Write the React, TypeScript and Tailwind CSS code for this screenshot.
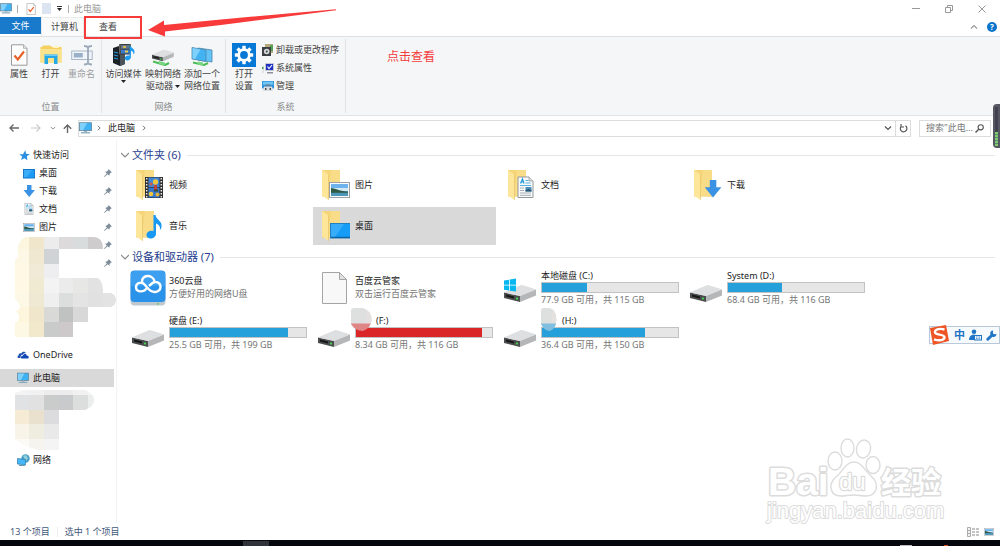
import type { ReactNode } from 'react';

const MonitorIcon = ({ className = 'h-3 w-3' }: { className?: string }) => (
  <svg viewBox="0 0 14 13" className={className} aria-hidden="true">
    <rect x="0.5" y="0.8" width="13" height="8.6" fill="#3fb2f4" stroke="#5f7d92" strokeWidth="0.8" />
    <path d="M1 1.2h7.6L4.5 9H1z" fill="#7fd0fb" />
    <path d="M5.5 9.8h3l.5 1.2h-4z" fill="#9fb3c0" />
    <rect x="2" y="11" width="10" height="1.4" fill="#8aa9bd" />
  </svg>
);

const CheckPageIcon = ({ className }: { className: string }) => (
  <svg viewBox="0 0 18 22" className={className} aria-hidden="true">
    <path d="M1.5.8h12l3.5 3.5v16.9H1.500z" fill="#fdfdfd" stroke="#9a9a9a" />
    <path d="M13.500.8v3.500H17" fill="#e6e6e6" stroke="#9a9a9a" strokeWidth="0.700" />
    <path d="M4.500 11.500l3.300 4L14 7.500" fill="none" stroke="#e8622c" strokeWidth="2.200" />
  </svg>
);

const OpenIcon = () => (
  <svg viewBox="0 0 22 22" className="h-[22px] w-[22px]" aria-hidden="true">
    <path d="M.5 3h2V1.500h8L12 3h9.500v15.500H.5z" fill="#f6cf63" />
    <path d="M.5 5h21v13.500H.5z" fill="#fbe28d" />
    <path d="M13 1.800h6V4h-6z" fill="#fff3c4" />
    <path d="M4.500 20v-9.500h13V20h-3.500v-6h-6v6z" fill="#25a8e6" />
    <path d="M4.500 10.500h13V12h-13z" fill="#70cdf5" />
  </svg>
);

const RenameIcon = () => (
  <svg viewBox="0 0 22 22" className="h-[22px] w-[22px]" aria-hidden="true">
    <rect x="0.700" y="7" width="20.500" height="8.500" fill="#f1f4f8" stroke="#a9b7c8" />
    <rect x="2.800" y="9" width="9" height="4.500" fill="#9ab0c9" />
    <path d="M13 2c2 0 3.500.5 4 1.500.5-1 2-1.500 4-1.500M17 3v16M13 20.500c2 0 3.500-.5 4-1.500.5 1 2 1.500 4 1.500" fill="none" stroke="#9aa9ba" strokeWidth="1.800" />
  </svg>
);

const MediaIcon = () => (
  <svg viewBox="0 0 24 22" className="h-[22px] w-6" aria-hidden="true">
    <path d="M1 4l6-2 6 2v16l-5 2-7-3z" fill="#1c2126" />
    <path d="M8 6l5-2v16l-5 2z" fill="#4b545b" />
    <path d="M2 8l4 1M2 11l4 1M2 14l4 1" stroke="#2a9be0" strokeWidth="1.200" />
    <path d="M7 0h12v10.500H7z" fill="#3b3b38" />
    <path d="M9 1h8v3.800H9z" fill="#61778b" /><path d="M9 5.700h8v3.800H9z" fill="#3b7bd0" />
    <path d="M11 2h3v2h-3z" fill="#d8b553" /><path d="M13 6.500h3v2h-3z" fill="#e9c94e" />
    <path d="M7.800.5v10M18.200.5v10" stroke="#ddd" strokeWidth="0.800" strokeDasharray="1 1" />
    <path d="M17.500 0c.5 4 5.500 4 5 8.500-.3 1.500-1 2-1 2 .3-3-2-3.500-2.600-4V13c0 3.500-5 4.500-6 2-.6-2.500 2.600-4 4.600-3.200z" fill="#1d9bf0" />
  </svg>
);

const DriveShape = () => (
  <g>
    <path d="M0 8.500L18 1l14 4.500-16 9.500z" fill="#dcdedf" />
    <path d="M0 8.500L16 12v6L0 14z" fill="#4a4c4d" />
    <path d="M16 12L32 5.500v6L16 18z" fill="#b4b6b8" />
    <path d="M0 8.500L17 1.200 32 5.500 16 12z" fill="#dddfe1" />
    <path d="M2 10.500l8 2v2l-8-2z" fill="#161616" />
    <circle cx="13" cy="14.600" r="1.100" fill="#41dd4e" />
  </g>
);

const NetDriveIcon = () => (
  <svg viewBox="0 0 24 22" className="h-[22px] w-6" aria-hidden="true">
    <g transform="translate(1 5) scale(.68)"><DriveShape /></g>
    <path d="M2 17.500l12 3.500 4-2" fill="none" stroke="#4dbd59" strokeWidth="2.200" />
    <path d="M8 17l6 1.500v3l-6-1.500z" fill="#79d783" />
  </svg>
);

const NetPlaceIcon = () => (
  <svg viewBox="0 0 24 22" className="h-[22px] w-6" aria-hidden="true">
    <path d="M8 4l14 2v12l-14-2z" fill="#63c3f6" stroke="#4f87a9" strokeWidth="0.800" />
    <path d="M2 3.500l14 2.500v11.500L2 15z" fill="#43b2f3" stroke="#4f87a9" strokeWidth="0.800" />
    <path d="M2.500 4l8 1.500L5 15l-2.500-.4z" fill="#7fd1fb" />
    <path d="M3 18.500l11 2.500 4-2" fill="none" stroke="#4dbd59" strokeWidth="2" />
    <path d="M8 17.500l5 1v3l-5-1z" fill="#79d783" />
  </svg>
);

const SettingsIcon = () => (
  <svg viewBox="0 0 24 24" className="h-6 w-6" aria-hidden="true">
    <rect width="24" height="24" fill="#0878d7" />
    <g fill="#fff">
      {[0, 45, 90, 135, 180, 225, 270, 315].map((a) => (
        <rect key={a} x="10.300" y="2.800" width="3.400" height="4" transform={`rotate(${a} 12 12)`} />
      ))}
    </g>
    <circle cx="12" cy="12" r="5.300" fill="none" stroke="#fff" strokeWidth="2.800" />
  </svg>
);

const UninstallIcon = () => (
  <svg viewBox="0 0 12 12" className="h-3 w-3" aria-hidden="true">
    <path d="M3 0h8v9H3z" fill="#b7a77d" /><path d="M8 1h3v6H8z" fill="#53a35a" />
    <path d="M0 3h9v9H0z" fill="#3b3f42" />
    <circle cx="4.700" cy="7.500" r="2.800" fill="#d5d8da" /><circle cx="4.700" cy="7.500" r="1" fill="#3b3f42" />
  </svg>
);
const SysPropsIcon = () => (
  <svg viewBox="0 0 12 12" className="h-3 w-3" aria-hidden="true">
    <path d="M3 1h9v8H3z" fill="#c7c9d6" /><path d="M4 2h7v6H4z" fill="#1f2fc0" />
    <path d="M5.500 4.500l1.500 2 3-3.500" fill="none" stroke="#fff" strokeWidth="1.100" />
    <path d="M5 10h6v1.500H5z" fill="#8b8f9c" /><path d="M0 4h2v7H0z" fill="#dfe4df" /><path d="M0 5h1.500v2H0z" fill="#4c9b56" />
  </svg>
);
const ManageIcon = () => (
  <svg viewBox="0 0 12 12" className="h-3 w-3" aria-hidden="true">
    <path d="M0 1h12v7.500H0z" fill="#2e93dd" /><path d="M.8 1.700h10.400v3H.8z" fill="#71c5f5" />
    <path d="M2 6.500h8l1 4.500H1z" fill="#dadde0" /><path d="M4 6.500V5h4v1.500" fill="none" stroke="#777" />
    <path d="M3 8h1.500v2H3zM7.500 8H9v2H7.500z" fill="#4c5257" />
  </svg>
);

const PinIcon = () => (
  <svg viewBox="0 0 8 8" className="h-2 w-2" aria-hidden="true">
    <path d="M4.600 0L8 3.400l-1 .2-1.400 1.500-.2 1.700L3.600 5.200.4 8 0 7.600 2.800 4.400 1.200 2.700l1.700-.2L4.400 1z" fill="#7d8c98" />
  </svg>
);

const StarIcon = () => (
  <svg viewBox="0 0 12 12" className="h-[11px] w-[11px]" aria-hidden="true">
    <path d="M6.800.3l1 3.900 4 .4-3.200 2.300.6 4.400-3.300-2.400-3.700 1.900 1.300-3.800L.3 4.700l4.100-.2z" fill="#2d8fe2" />
  </svg>
);
const DesktopSmall = () => (
  <svg viewBox="0 0 12 11" className="h-[11px] w-3" aria-hidden="true">
    <rect x="0.500" y="1.500" width="11" height="8.500" fill="#1b9bf5" stroke="#1679cc" />
    <path d="M1 2h8l-5 7H1z" fill="#3bacf8" />
  </svg>
);
const DownArrow = () => <path d="M4 0h4.500v5H12L6.200 12 .5 5H4z" fill="#3a92e4" />;
const DownloadSmall = () => (
  <svg viewBox="0 0 12 12" className="h-3 w-3" aria-hidden="true"><DownArrow /></svg>
);
const DocShape = () => (
  <g>
    <path d="M.5.5h11l4 4v16.500H.5z" fill="#f8fafb" stroke="#93999d" />
    <path d="M11.500.5v4h4" fill="#ddd" stroke="#93999d" strokeWidth="0.700" />
    <path d="M3 7l2-4.500L6.500 7M3.500 5.500h2.500" fill="none" stroke="#249bd8" strokeWidth="1.200" />
    <path d="M8 4h3M8 6.500h5M2.500 9h11" stroke="#58b1dc" />
    <path d="M2.500 11.500h4M2.500 14h4M2.500 16.500h11M2.500 18.800h11" stroke="#a7afb4" />
    <path d="M8 10.500h6v4.500H8z" fill="#4b90bd" /><path d="M8 13.500l3-1 3 1v1.500H8z" fill="#28576f" />
  </g>
);
const DocSmall = () => (
  <svg viewBox="0 0 16 22" className="h-3 w-3" aria-hidden="true"><DocShape /></svg>
);
const PhotoShape = () => (
  <g>
    <rect x="0.500" y="0.500" width="20" height="15" fill="#fafafa" stroke="#9aa0a4" />
    <path d="M2 2h17v12H2z" fill="#6fb3ee" /><path d="M2 6h17v3H2z" fill="#d3e9f7" />
    <path d="M2 6c4 0 7 3 17 3.500V11H2z" fill="#2f5b45" /><path d="M2 10.800h17V14H2z" fill="#4c96b7" />
  </g>
);
const PhotoSmall = () => (
  <svg viewBox="0 0 21 16" className="h-[9px] w-3" aria-hidden="true"><PhotoShape /></svg>
);
const OneDriveIcon = () => (
  <svg viewBox="0 0 13 9" className="h-2 w-3" aria-hidden="true">
    <path d="M1.500 8C0 8 0 5.500 1.500 5c0-2 1.700-2.800 3-2.200C5.600.4 9 .2 9.900 2.800 8 2.200 6.800 3 6.200 4.200 4.500 4 3.300 5.500 3.800 8z" fill="#1d4fb0" />
    <path d="M5 8.500C3.600 8 4 5.300 6.300 5.300c.6-2.400 3.800-2.500 4.400-.2C13.500 5 13.600 8.500 11.500 8.500z" fill="#1349b6" />
  </svg>
);
const NetworkIcon = () => (
  <svg viewBox="0 0 13 12" className="h-3 w-[13px]" aria-hidden="true">
    <circle cx="8.500" cy="4.500" r="4.200" fill="#4b9fc4" /><path d="M6 2l3-1 2 3-2 3z" fill="#8fd0dc" />
    <path d="M.5 4.500l8 1v5.500l-8-1z" fill="#45b6f6" stroke="#2f7daa" strokeWidth="0.700" />
    <path d="M2 11.500h6" stroke="#6b9db7" />
  </svg>
);

const Folder = ({ children }: { children: ReactNode }) => (
  <svg viewBox="0 0 28 30" className="h-[30px] w-7" aria-hidden="true">
    <path d="M0 0h18v26.500H0z" fill="#f5d578" /><path d="M9 0h9v26.500H6z" fill="#f8dc88" />
    <path d="M0 0l6.500 4.500V30L0 25.500z" fill="#fde59a" /><path d="M6.500 4.500V30" stroke="#e3bf62" strokeWidth="0.600" />
    {children}
  </svg>
);
const VideoArt = () => (
  <g transform="translate(9 7)">
    <path d="M0 0h18v21H0z" fill="#2f2f2f" /><path d="M3.500.5h11v9.800h-11z" fill="#3f86d9" /><path d="M3.500 11h11v9.500h-11z" fill="#3577cc" />
    <path d="M1.700 1v19.500M16.300 1v19.500" stroke="#e8e8e8" strokeWidth="1.500" strokeDasharray="1.500 1.500" />
    <circle cx="10.500" cy="5" r="2.700" fill="#eec53c" /><path d="M9 8h3v5H9z" fill="#c4423a" /><circle cx="6" cy="7" r="1.600" fill="#d45a43" />
    <circle cx="6" cy="17" r="2.300" fill="#f0c83e" /><circle cx="12.500" cy="17.500" r="2" fill="#e2b139" /><path d="M9 12.500h4v2H9z" fill="#3b4a2c" />
  </g>
);
const MusicArt = () => (
  <path d="M17.500 4h2c.5 5 7 5.500 6 12-.3 1.500-1 2.500-1.500 3 .5-4-2-6-4-6.500v10c0 6-9 6.500-9.500 2-.2-4 4.500-5.500 7-4.200z" fill="#1698f3" />
);
const DesktopArt = () => (
  <g transform="translate(8 12)">
    <rect x="0.500" y="0.500" width="20" height="14.500" fill="#159cf6" stroke="#2280bf" />
    <path d="M1 1h13L5 14H1z" fill="#37adf9" /><path d="M1 14.300h19" stroke="#0c5a95" />
  </g>
);

const DriveIcon = ({ windows = false }: { windows?: boolean }) => (
  <svg viewBox="0 0 32 34" className="h-[34px] w-8" aria-hidden="true">
    <g transform="translate(0 13)"><DriveShape /></g>
    {windows && <path d="M0 9.500l5-.8v5.100H0zM5.800 8.500L12 7.500v6.300H5.800zM0 14.600h5v5l-5-.8zM5.800 14.600H12v6l-6.200-.9z" fill="#08b7f0" />}
  </svg>
);
const CloudDiskIcon = () => (
  <svg viewBox="0 0 36 36" className="h-9 w-9" aria-hidden="true">
    <rect x="0.500" y="6" width="35" height="29.500" rx="4" fill="#bfc8cf" />
    <rect x="0.500" y="0.500" width="35" height="31.500" rx="4" fill="#2b92ea" />
    <path d="M1 16V5q0-4 4-4h26q4 0 4 4v11z" fill="#3c9ff0" />
    <path d="M17 17.500c-2.500 5-11 5.500-11-.2 0-5 6-5.800 8.500-2.800l4.500 5c4 4.500 11.500 2.600 11.500-2.700 0-4.500-5-6-8-3.800l-3.500 3M12 12c-.5-7.500 10.500-8 12.500-1" fill="none" stroke="#fff" strokeWidth="2.400" />
    <circle cx="28" cy="33.800" r="0.900" fill="#62c84f" />
  </svg>
);
const BlankPageIcon = () => (
  <svg viewBox="0 0 25 32" className="h-8 w-[25px]" aria-hidden="true">
    <path d="M.5.5h17l7 7v24H.5z" fill="#f8f8f8" stroke="#a5a5a5" /><path d="M17.500.5v7h7z" fill="#e1e1e1" stroke="#a5a5a5" />
  </svg>
);

type Cell = [number, number, number, number, string];

const Mosaic = ({ cells, width, height, id, clip, className }: { cells: Cell[]; width: number; height: number; id: string; clip: ReactNode; className: string }) => (
  <svg viewBox={`0 0 ${width} ${height}`} className={className} aria-hidden="true">
    <clipPath id={id}>{clip}</clipPath>
    <g clipPath={`url(#${id})`} shapeRendering="crispEdges">
      {cells.map(([x, y, w, h, c]) => <rect key={`${x}-${y}`} x={x} y={y} width={w} height={h} fill={c} />)}
    </g>
  </svg>
);

const toCells = (rows: string[][], tops: number[]): Cell[] => {
  const xs = [0, 14, 29, 44, 58, 73, 88, 101];
  return rows.flatMap((row, r) => row.map((c, i): Cell => [xs[i], tops[r], xs[i + 1] - xs[i], tops[r + 1] - tops[r], c]));
};

const upperCells = toCells(
  [
    ['#fdf6df', '#efe6cc', '#ececec', '#dcdadb', '#d9dcdc', '#cfcccd'],
    ['#fdf8e6', '#f0e8d0', '#d0d3d5'],
    ['#fef8e5', '#f1ead6', '#eeeef0'],
    ['#fef8e4', '#f1ead3', '#f3f3f3', '#ebebeb', '#e7e7e6', '#e2e2e2'],
    ['#fdf8e6', '#efe9d4', '#efeff0', '#dcdedd', '#e5e4e4', '#e1e1e1', '#e3e3e3'],
    ['#fdf5dc', '#efe6cb', '#d9dad8', '#c0c2c2', '#d9d8d9'],
    ['#fdf8e3', '#f2e9cd', '#c9cbca', '#cdc9ca'],
  ],
  [0, 12, 27, 41, 56, 70, 85, 100],
);
const lowerCells = toCells(
  [
    ['#f3f3f3', '#f1f1f1', '#ececec', '#ececec', '#f1f1f1', '#f5f5f5'],
    ['#e0e2e3', '#e1e1e1', '#c9cccb', '#c8cacb', '#dcdede', '#eceded'],
    ['#f6ecd5', '#e9e1cd', '#dcdbdd'],
    ['#f8f4ea', '#efece0', '#e9e9ea'],
    ['#fcfaf5', '#f6f4ee', '#f4f4f4'],
  ],
  [0, 5, 20, 34, 49, 60],
);

const NavItem = ({ icon, label, pinned = false, nested = false, selected = false }: { icon: ReactNode; label: string; pinned?: boolean; nested?: boolean; selected?: boolean }) => (
  <button type="button" className={`flex h-[18px] w-full items-center pr-[2px] text-left ${nested ? 'pl-[23px]' : 'pl-[17px]'} ${selected ? 'bg-[#d9d9d9]' : ''}`}>
    <span className="flex w-4 shrink-0 items-center">{icon}</span>
    <span className="flex-1">{label}</span>
    {pinned && <PinIcon />}
  </button>
);

const RibbonGroup = ({ label, children, className }: { label: string; children: ReactNode; className: string }) => (
  <section className={`my-[2px] flex flex-col justify-between border-r border-[#e2e3e4] ${className}`}>
    <div className="flex items-start">{children}</div>
    <h2 className="text-center leading-3 text-[#8b8d8f]">{label}</h2>
  </section>
);

const BigButton = ({ icon, lines, muted = false, arrow, className }: { icon: ReactNode; lines: string[]; muted?: boolean; arrow?: 'below' | 'inline'; className: string }) => (
  <button type="button" className={`flex flex-col items-center whitespace-nowrap pt-[3px] leading-3 ${muted ? 'text-[#9b9d9f]' : 'text-[#444]'} ${className}`}>
    <span className="flex h-[26px] items-center">{icon}</span>
    {lines.map((line, i) => (
      <span key={line} className="flex items-center gap-[2px]">
        {line}
        {arrow === 'inline' && i === lines.length - 1 && <Caret />}
      </span>
    ))}
    {arrow === 'below' && <Caret />}
  </button>
);

const Caret = () => (
  <svg viewBox="0 0 5 3" className="h-[3px] w-[5px]" aria-hidden="true"><path d="M0 0h5L2.500 3z" fill="#222" /></svg>
);

const Chevron = ({ d, className, color = '#666' }: { d: string; className: string; color?: string }) => (
  <svg viewBox="0 0 8 8" className={className} aria-hidden="true"><path d={d} fill="none" stroke={color} strokeWidth="1.200" /></svg>
);

const SectionTitle = ({ children }: { children: ReactNode }) => (
  <h2 className="flex h-4 items-center text-[11px] leading-4 text-[#27408f]">
    <Chevron d="M0 2l4 4 4-4" className="mr-[3px] h-2 w-2" color="#888" />
    {children}
    <span className="ml-[6px] h-px flex-1 bg-[#e6e6e6]" />
  </h2>
);

const folders = [
  { name: '视频', art: <VideoArt /> },
  { name: '图片', art: <g transform="translate(7 12)"><PhotoShape /></g> },
  { name: '文档', art: <g transform="translate(9.500 6.500)"><DocShape /></g> },
  { name: '下载', art: <g transform="translate(10 10) scale(1.450)"><DownArrow /></g> },
  { name: '音乐', art: <MusicArt /> },
  { name: '桌面', art: <DesktopArt />, selected: true },
];

const Smudge = ({ low, id, className }: { low: string; id: string; className: string }) => (
  <svg viewBox="0 0 24 24" preserveAspectRatio="none" className={`absolute -top-[6px] z-10 h-6 ${className}`} aria-hidden="true">
    <clipPath id={id}><path d="M0 2Q0 0 4 0h8a12 12 0 0 1 0 23Q4 23 0 16z" /></clipPath>
    <g clipPath={`url(#${id})`}>
      <path d="M0 0h24v16H0z" fill="#dedfdf" /><path d="M15 0h9v16h-9z" fill="#e4e0e0" /><path d="M0 15.500h24V24H0z" fill={low} />
    </g>
  </svg>
);

const Drive = ({ name, info, used, full = false, windows = false, smudge }: { name: string; info: string; used: number; full?: boolean; windows?: boolean; smudge?: string }) => (
  <button type="button" className="flex h-[44px] items-center pl-[5px] text-left">
    <DriveIcon windows={windows} />
    <span className="relative ml-[5px] block w-[138px]">
      {smudge && <Smudge low={smudge} id={full ? 'smudge-f' : 'smudge-h'} className={full ? '-left-1 w-6' : 'left-0 w-[18px]'} />}
      <span className={`block leading-[13px] ${smudge ? 'pl-[21px]' : ''}`}>{name}</span>
      <span role="progressbar" aria-valuenow={used} aria-valuemin={0} aria-valuemax={100} aria-label={info} className="block h-[11px] border border-[#c2c2c2] bg-[#e6e6e6]">
        <span className={`block h-full ${full ? 'bg-[#da2626]' : 'bg-[#26a0da]'}`} style={{ width: `${used}%` }} />
      </span>
      <span className="block leading-[14px] text-[#757575]">{info}</span>
    </span>
  </button>
);

const AppTile = ({ icon, name, info }: { icon: ReactNode; name: string; info: string }) => (
  <button type="button" className="flex h-[44px] items-center text-left">
    <span className="flex w-[42px] shrink-0 justify-center">{icon}</span>
    <span className="block pb-[2px] leading-[13px]">
      <span className="block">{name}</span>
      <span className="block text-[#757575]">{info}</span>
    </span>
  </button>
);

const Watermark = () => (
  <svg viewBox="0 0 182 88" className="pointer-events-none absolute bottom-[21px] right-[53px] h-[88px] w-[182px]" aria-hidden="true">
    <g fill="#fff" stroke="#dcdcdc" strokeWidth="1.400" strokeLinejoin="round" fontFamily="'Liberation Sans', 'Noto Sans CJK SC', sans-serif">
      <text x="3" y="58" fontSize="39" fontWeight="700" strokeWidth="3" paintOrder="stroke">Bai</text>
      <ellipse cx="70" cy="24" rx="7" ry="9" /><ellipse cx="82.500" cy="11" rx="6.500" ry="9" />
      <ellipse cx="98.500" cy="12" rx="7" ry="9" transform="rotate(12 98.500 12)" /><ellipse cx="108" cy="28" rx="7" ry="8.500" />
      <path d="M89 25c8 0 11 9 17 14 10 9 5 20-5 20-5 0-7-1-12-1s-8 1-13 1c-11 0-14-12-4-20 6-5 9-14 17-14z" />
      <text x="74" y="53" fontSize="24" strokeWidth="2.500" paintOrder="stroke">du</text>
      <text x="116" y="56" fontSize="30" fontWeight="700" strokeWidth="3" paintOrder="stroke">经验</text>
      <text x="2" y="81" fontSize="22" strokeWidth="2" paintOrder="stroke">jingyan.baidu.com</text>
    </g>
  </svg>
);

const iconButton = 'flex items-center justify-center';

export default function App() {
  return (
    <div className="relative flex min-h-screen flex-col overflow-hidden bg-white font-['Noto_Sans','Noto_Sans_CJK_SC',sans-serif] text-[9px] leading-3 text-[#222]">
      <header className="flex h-[17px] items-center">
        <MonitorIcon className="h-[11px] w-3" />
        <span className="ml-[5px] h-2 w-px bg-[#aaa]" />
        <button type="button" aria-label="属性" className="ml-2"><CheckPageIcon className="h-3 w-[10px]" /></button>
        <button type="button" aria-label="新建文件夹" className="ml-[6px] h-[11px] w-[9px] bg-[#dce4f2]" />
        <button type="button" aria-label="自定义快速访问工具栏" className="ml-[6px] flex flex-col items-center gap-px">
          <span className="h-px w-[5px] bg-[#333]" /><Caret />
        </button>
        <span className="ml-[6px] h-2 w-px bg-[#aaa]" />
        <h1 className="ml-[5px] flex-1 text-[#999]">此电脑</h1>
        <div className="flex gap-[25px] pr-[14px]">
          <button type="button" aria-label="最小化" className={iconButton}><svg viewBox="0 0 8 8" className="h-2 w-2"><path d="M0 3.500h8" stroke="#999" /></svg></button>
          <button type="button" aria-label="还原" className={iconButton}><svg viewBox="0 0 8 8" className="h-2 w-2"><path d="M.5 2.500h5v5h-5zM2.500 2V.5h5v5H6" fill="none" stroke="#999" /></svg></button>
          <button type="button" aria-label="关闭" className={iconButton}><svg viewBox="0 0 8 8" className="h-2 w-2"><path d="M.5.5l7 7M7.500.5l-7 7" stroke="#999" /></svg></button>
        </div>
      </header>

      <nav className="flex h-5 items-stretch border-b border-[#dfe0e1]">
        <button type="button" className="mb-[2px] w-[41px] bg-[#1979ca] text-white">文件</button>
        <button type="button" className="w-[43px] border-x border-t border-[#e9eaeb] bg-[#fbfbfc] pl-1 text-[#444]">计算机</button>
        <button type="button" className="relative w-[58px] pl-[15px] text-left text-[#444]">
          查看
          <span className="absolute inset-x-0 -bottom-[3px] -top-px border-2 border-[#f63b3b]" />
        </button>
        <div className="ml-auto flex items-center gap-[9px] pr-[3px]">
          <button type="button" aria-label="折叠功能区"><Chevron d="M1 5.500l3-3 3 3" className="h-2 w-2" color="#999" /></button>
          <button type="button" className="h-[10px] w-[10px] rounded-full bg-[#0873cb] text-[8px] font-bold leading-[10px] text-white">?</button>
        </div>
      </nav>

      <div className="flex h-[79px] items-stretch border-b border-[#e2e3e4] bg-[#f5f6f7]">
        <RibbonGroup label="位置" className="w-[102px]">
          <BigButton className="w-[38px]" icon={<CheckPageIcon className="h-[22px] w-[18px]" />} lines={['属性']} />
          <BigButton className="w-[25px]" icon={<OpenIcon />} lines={['打开']} />
          <BigButton className="w-[37px]" icon={<RenameIcon />} lines={['重命名']} muted />
        </RibbonGroup>
        <RibbonGroup label="网络" className="w-[124px]">
          <BigButton className="w-[43px]" icon={<MediaIcon />} lines={['访问媒体']} arrow="below" />
          <BigButton className="w-[36px]" icon={<NetDriveIcon />} lines={['映射网络', '驱动器']} arrow="inline" />
          <BigButton className="w-[42px]" icon={<NetPlaceIcon />} lines={['添加一个', '网络位置']} />
        </RibbonGroup>
        <RibbonGroup label="系统" className="w-[120px]">
          <BigButton className="w-9" icon={<SettingsIcon />} lines={['打开', '设置']} />
          <div className="flex flex-col pt-[2px] text-[#444]">
            <button type="button" className="flex h-[18px] items-center gap-[2px]"><UninstallIcon />卸载或更改程序</button>
            <button type="button" className="flex h-[18px] items-center gap-[2px]"><SysPropsIcon />系统属性</button>
            <button type="button" className="flex h-[18px] items-center gap-[2px]"><ManageIcon />管理</button>
          </div>
        </RibbonGroup>
        <p className="ml-[41px] mt-3 text-[12px] leading-4 text-[#f43c3c]">点击查看</p>
      </div>

      <div className="flex h-6 items-center pr-[9px]">
        <div className="flex w-[78px] items-center pl-[9px]">
          <button type="button" aria-label="后退"><svg viewBox="0 0 10 8" className="h-2 w-[10px]"><path d="M10 4H1M4.500.5L1 4l3.500 3.500" fill="none" stroke="#666" strokeWidth="1.300" /></svg></button>
          <button type="button" aria-label="前进" className="ml-3"><svg viewBox="0 0 10 8" className="h-2 w-[10px]"><path d="M0 4h9M5.500.5L9 4 5.500 7.500" fill="none" stroke="#ccc" strokeWidth="1.200" /></svg></button>
          <button type="button" aria-label="最近浏览的位置" className="ml-[9px]"><Chevron d="M1 2.500l3 3 3-3" className="h-[6px] w-[6px]" color="#888" /></button>
          <button type="button" aria-label="向上" className="ml-[7px]"><svg viewBox="0 0 9 9" className="h-[9px] w-[9px]"><path d="M4.500 9V1M.8 4.700L4.500 1l3.700 3.700" fill="none" stroke="#666" strokeWidth="1.400" /></svg></button>
        </div>
        <div className="flex h-[17px] flex-1 items-center border border-[#dcdcdc]">
          <MonitorIcon className="h-3 w-[13px]" />
          <Chevron d="M2.500 1l3 3-3 3" className="ml-1 h-[6px] w-[6px]" />
          <span className="mx-[6px]">此电脑</span>
          <Chevron d="M2.500 1l3 3-3 3" className="h-[6px] w-[6px]" />
          <button type="button" aria-label="以前的位置" className="ml-auto mr-[3px]"><Chevron d="M1 2.500l3 3 3-3" className="h-2 w-2" color="#555" /></button>
          <button type="button" aria-label="刷新" className="flex h-full w-[15px] items-center justify-center border-l border-[#dcdcdc]">
            <svg viewBox="0 0 9 9" className="h-[9px] w-[9px]"><path d="M6.500 1.800A3.300 3.300 0 1 1 2 2.500M2 0v3h3" fill="none" stroke="#555" strokeWidth="1.200" /></svg>
          </button>
        </div>
        <label className="ml-2 flex h-[17px] w-[72px] items-center border border-[#dcdcdc] pl-[6px]">
          <input type="text" aria-label="搜索" placeholder='搜索"此电...' className="w-[49px] min-w-0 bg-transparent outline-none placeholder:text-[#777]" />
          <svg viewBox="0 0 9 9" className="h-[9px] w-[9px]" aria-hidden="true"><circle cx="5.700" cy="3.300" r="2.600" fill="none" stroke="#555" strokeWidth="1.100" /><path d="M3.800 5.200L.5 8.500" stroke="#555" strokeWidth="1.400" /></svg>
        </label>
      </div>

      <div className="flex flex-1">
        <aside className="relative w-[117px] shrink-0 border-r border-[#f3f3f3] pr-[2px] pt-[6px]">
          <Mosaic id="mosaic-upper" cells={upperCells} width={101} height={100} className="absolute left-[15px] top-[97px] h-[100px] w-[101px]"
            clip={<path d="M10 0h68q10 0 10 12H44v15q6 10-1 14h40q5 3 5 15h8q5 2 5 7t-5 7H73v15H58v15H0V85q4 0 4-5t-4-6q5 0 5-5l-5-8V22q3 0 3-4Q1 6 10 0z" />} />
          <NavItem icon={<span className="pl-[2px]"><StarIcon /></span>} label="快速访问" />
          <div className="relative">
            <NavItem nested pinned icon={<DesktopSmall />} label="桌面" />
            <NavItem nested pinned icon={<DownloadSmall />} label="下载" />
            <NavItem nested pinned icon={<DocSmall />} label="文档" />
            <NavItem nested pinned icon={<PhotoSmall />} label="图片" />
            <NavItem nested pinned icon={null} label="" />
            <NavItem nested pinned icon={null} label="" />
          </div>
          <div className="mt-[74px]"><NavItem icon={<OneDriveIcon />} label="OneDrive" /></div>
          <div className="mt-[5px]"><NavItem icon={<MonitorIcon />} label="此电脑" selected /></div>
          <Mosaic id="mosaic-lower" cells={lowerCells} width={88} height={60} className="ml-[15px] mt-[3px] h-[60px] w-[88px]"
            clip={<path d="M0 3l8-3h62q9 3 9 10t-9 10H44v40H24Q6 56 0 49z" />} />
          <div className="mt-px"><NavItem icon={<NetworkIcon />} label="网络" /></div>
        </aside>

        <main className="min-w-0 flex-1 pl-1 pr-[5px] pt-[7px]">
          <SectionTitle>文件夹 (6)</SectionTitle>
          <div className="ml-[6px] mt-[3px] grid grid-cols-[repeat(auto-fill,183px)] gap-x-[3px] gap-y-[3px]">
            {folders.map((f) => (
              <button key={f.name} type="button" className={`flex h-[38px] items-center gap-[5px] pl-[9px] text-left ${f.selected ? 'bg-[#d9d9d9]' : ''}`}>
                <Folder>{f.art}</Folder>{f.name}
              </button>
            ))}
          </div>
          <div className="mt-1"><SectionTitle>设备和驱动器 (7)</SectionTitle></div>
          <div className="ml-[6px] mt-px grid grid-cols-[repeat(auto-fill,183px)] gap-x-[3px] gap-y-px">
            <AppTile icon={<CloudDiskIcon />} name="360云盘" info="方便好用的网络U盘" />
            <AppTile icon={<BlankPageIcon />} name="百度云管家" info="双击运行百度云管家" />
            <Drive windows name="本地磁盘 (C:)" info="77.9 GB 可用，共 115 GB" used={33} />
            <Drive name="System (D:)" info="68.4 GB 可用，共 116 GB" used={40} />
            <Drive name="硬盘 (E:)" info="25.5 GB 可用，共 199 GB" used={87} />
            <Drive full name="(F:)" info="8.34 GB 可用，共 116 GB" used={93} smudge="#e08585" />
            <Drive name="(H:)" info="36.4 GB 可用，共 150 GB" used={76} smudge="#80bfdf" />
          </div>
        </main>
      </div>

      <footer className="flex h-[17px] items-center pl-[10px] pr-[6px] text-[#3f5878]">
        <span>13 个项目</span>
        <span className="mx-[7px] h-[10px] w-px bg-[#eee]" />
        <span>选中 1 个项目</span>
        <button type="button" aria-label="详细信息" className="ml-auto">
          <svg viewBox="0 0 12 10" className="h-[10px] w-3"><path d="M.5.500h3v9h-3zM.5 3.500h3M.5 6.500h3" fill="#f3f3f3" stroke="#999" strokeWidth="0.800" /><path d="M5 2h3M9 2h3M5 5h3M9 5h3M5 8h3M9 8h3" stroke="#888" /></svg>
        </button>
        <button type="button" aria-label="大图标" className="ml-[5px]"><svg viewBox="0 0 21 16" className="h-2 w-[10px]"><PhotoShape /></svg></button>
      </footer>
      <div className="flex h-[6px] items-end bg-[#05070c]">
        <span className="ml-[243px] h-[5px] w-[26px] bg-[#30343a]" />
        <span className="ml-auto mr-[52px] flex items-end gap-8"><span className="h-px w-3 bg-[#bbb]" /><span className="h-px w-1 bg-[#d84a20]" /></span>
      </div>

      <svg viewBox="0 0 190 30" className="pointer-events-none absolute left-[148px] top-[8px] h-[30px] w-[190px]" aria-hidden="true">
        <path d="M0 22l16-9.500V17l57-5.500L188 1.200v1L73 17l-56 6.500v5z" fill="#f93a3a" />
      </svg>

      <div className="absolute right-0 top-[104px] flex h-11 w-[7px] flex-col justify-end rounded-l-sm bg-[#555763] p-[2px]">
        <span className="h-[25px] bg-[#40424f]" /><span className="h-[14px] bg-[repeating-linear-gradient(#86c96a_0_2px,#4f8f78_2px_3px)]" />
      </div>

      <div className="absolute right-0 top-[326px] flex h-[18px] items-center gap-1 border border-[#b9c9da] bg-[#f7fafd] pl-6 pr-[2px] text-[#1f74c5]">
        <svg viewBox="0 0 20 20" className="absolute -left-px -top-[2px] h-5 w-5" aria-hidden="true">
          <path d="M1 3L17 0l3 16-16 4z" fill="#ee5424" />
          <path d="M15.500 4.500C10 3 5.500 4.500 6 7.500c.5 2.800 9.500 1.500 9.500 4.800 0 3-5.500 3.700-10.500 2" fill="none" stroke="#fff" strokeWidth="2.400" />
        </svg>
        <button type="button" className="text-[11px] font-bold">中</button>
        <button type="button" aria-label="账户"><svg viewBox="0 0 13 12" className="h-3 w-[13px]"><circle cx="5" cy="2.800" r="2.300" fill="#1f74c5" /><path d="M0 11q0-5 5-5.500 4 .5 4 5.500z" fill="#1f74c5" /><rect x="5.500" y="6.500" width="7" height="4.500" fill="#eaf4fc" stroke="#1f74c5" /><path d="M7 8h4M7 9.500h4" stroke="#1f74c5" strokeWidth="0.700" strokeDasharray="1 .5" /></svg></button>
        <button type="button" aria-label="工具"><svg viewBox="0 0 12 12" className="h-[11px] w-[11px]"><path d="M7.800.6L7.500 3.500l1.200 1.200 2.700-.3c0 2.500-2.400 3.800-4.400 2.900L2.500 11.600Q.8 12 .4 10.500L.5 9.300l4.300-4.200C4 2.800 5.500.5 7.800.6z" fill="#1f74c5" /></svg></button>
      </div>

      <Watermark />
    </div>
  );
}
